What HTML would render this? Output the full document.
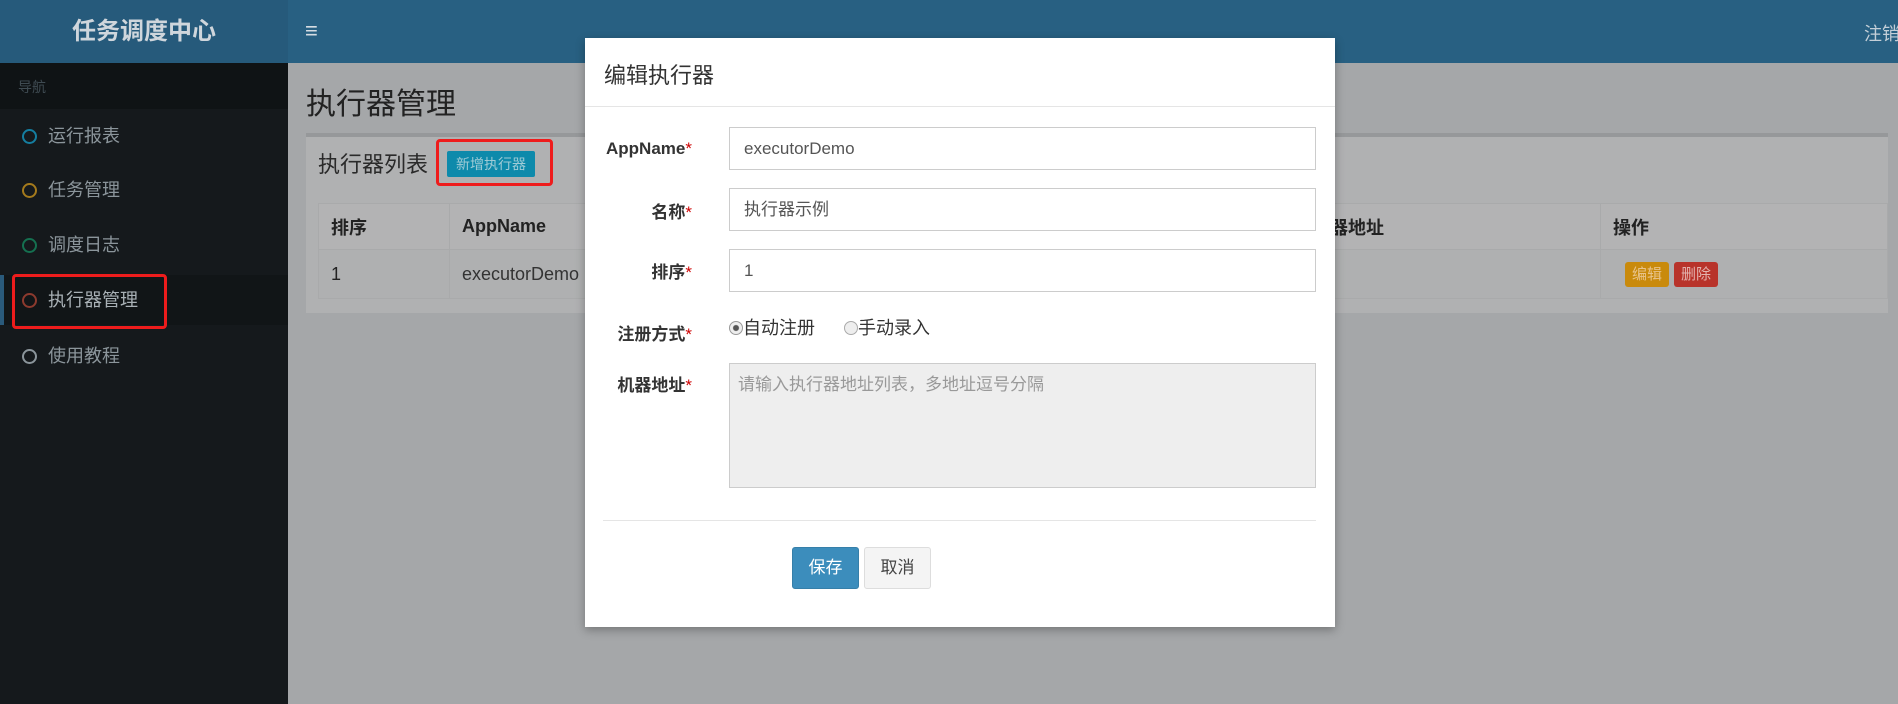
<!DOCTYPE html>
<html><head><meta charset="utf-8"><style>
*{box-sizing:border-box;margin:0;padding:0}
body{width:1898px;height:704px;overflow:hidden;background:#a5a7a9;font-family:"Liberation Sans","Noto Sans CJK SC",sans-serif;position:relative;color:#333}
.hdr{position:absolute;left:0;top:0;width:1898px;height:63px;background:#286082}
.logo{position:absolute;left:0;top:0;width:288px;height:63px;background:#265a7b;color:#cfd6dc;font-weight:bold;font-size:24px;text-align:center;line-height:63px}
.ham{position:absolute;left:305px;top:18px;color:#d6dde3;font-size:22px}
.out{position:absolute;left:1864px;top:20px;color:#c4cfd8;font-size:18px;white-space:nowrap}
.side{position:absolute;left:0;top:63px;width:288px;height:641px;background:#15191c}
.nav{height:46px;background:#0f1315;color:#3f4b52;font-size:14px;padding:14px 0 0 18px}
.item{position:absolute;left:0;height:50px;width:288px;font-size:18px;color:#8b959b;padding-left:48px;line-height:50px}
.item i{position:absolute;left:22px;top:18px;width:15px;height:15px;border-radius:50%;border:2.5px solid}
.act{border-left:4px solid #2a5a7b;background:#111517;color:#a9b1b6}
.title{position:absolute;left:306px;top:79px;font-size:30px;color:#222}
.box{position:absolute;left:306px;top:133px;width:1582px;height:180px;background:#b0b1b2;border-top:4px solid #96989a}
.bt{position:absolute;left:318px;top:147px;font-size:22px;color:#2a2a2a}
.add{position:absolute;left:447px;top:151px;width:88px;height:26px;background:#0e8aab;color:#9fcbd6;font-size:14px;text-align:center;line-height:26px;border-radius:2px}
.red{position:absolute;border:3px solid #ee1c1c;border-radius:4px}
table{position:absolute;left:318px;top:203px;width:1570px;border-collapse:collapse;font-size:18px;color:#222}
td{border:1px solid #a9aaab;padding:0 12px}
.th td{height:46px;font-weight:bold;background:#b3b3b4}
.tr td{height:49px;background:#afb0b1}
.lb{display:inline-block;height:25px;line-height:25px;padding:0 7px;font-size:15px;border-radius:3px;color:#e8c38a;background:#c98a0c}
.modal{position:absolute;left:585px;top:38px;width:750px;height:589px;background:#fff;box-shadow:0 3px 9px rgba(0,0,0,.3)}
.mh{height:69px;border-bottom:1px solid #e5e5e5;font-size:22px;color:#333;padding:20px 0 0 19px}
.lab{position:absolute;width:107px;text-align:right;font-weight:bold;font-size:17px;color:#333}
.lab b{color:#c00;font-weight:normal}
.in{position:absolute;left:144px;width:587px;border:1px solid #ccc;font-size:17px;color:#555;padding-left:14px}
.ta{background:#eee;color:#999}
.btn{position:absolute;top:509px;height:42px;line-height:40px;font-size:17px;text-align:center;border-radius:3px}
</style></head><body>
<div class="hdr"></div>
<div class="logo">任务调度中心</div>
<div class="ham">&#8801;</div>
<div class="out">注销</div>
<div class="side">
<div class="nav">导航</div>
<div class="item" style="top:48px"><i style="border-color:#157ea0"></i>运行报表</div>
<div class="item" style="top:102px"><i style="border-color:#a47a1c"></i>任务管理</div>
<div class="item" style="top:157px"><i style="border-color:#157050"></i>调度日志</div>
<div class="item act" style="top:212px;padding-left:44px"><i style="border-color:#8c3a2e;left:18px"></i>执行器管理</div>
<div class="item" style="top:268px"><i style="border-color:#8b959b"></i>使用教程</div>
</div>
<div class="red" style="left:12px;top:274px;width:155px;height:55px"></div>
<div class="title">执行器管理</div>
<div class="box"></div>
<div class="bt">执行器列表</div>
<div class="add">新增执行器</div>
<div class="red" style="left:436px;top:139px;width:117px;height:47px"></div>
<table>
<tr class="th"><td style="width:131px">排序</td><td style="width:850px">AppName</td><td style="width:301px">机器地址</td><td>操作</td></tr>
<tr class="tr"><td>1</td><td style="color:#333">executorDemo</td><td></td><td style="padding-left:24px"><span class="lb">编辑</span> <span class="lb" style="background:#b8332a;color:#e3b3ae">删除</span></td></tr>
</table>
<div class="modal">
<div class="mh">编辑执行器</div>
<div class="lab" style="top:101px">AppName<b>*</b></div>
<div class="in" style="top:89px;height:43px;line-height:41px">executorDemo</div>
<div class="lab" style="top:160px">名称<b>*</b></div>
<div class="in" style="top:150px;height:43px;line-height:41px">执行器示例</div>
<div class="lab" style="top:220px">排序<b>*</b></div>
<div class="in" style="top:211px;height:43px;line-height:41px">1</div>
<div class="lab" style="top:282px">注册方式<b>*</b></div>
<div style="position:absolute;left:144px;top:276px;font-size:18px;color:#333">
<span style="display:inline-block;width:14px;height:14px;border:1px solid #999;border-radius:50%;vertical-align:-1px;background:radial-gradient(#555 30%,#eee 40%)"></span>自动注册
<span style="display:inline-block;width:14px;height:14px;border:1px solid #aaa;border-radius:50%;vertical-align:-1px;margin-left:24px;background:#eee"></span>手动录入</div>
<div class="lab" style="top:333px">机器地址<b>*</b></div>
<div class="in ta" style="top:325px;height:125px;padding-top:6px;padding-left:8px">请输入执行器地址列表，多地址逗号分隔</div>
<div style="position:absolute;left:18px;top:482px;width:713px;border-top:1px solid #e5e5e5"></div>
<div class="btn" style="left:207px;width:67px;background:#3c8dbc;color:#fff;border:1px solid #367fa9">保存</div>
<div class="btn" style="left:279px;width:67px;background:#f4f4f4;color:#444;border:1px solid #ddd">取消</div>
</div>
</body></html>
